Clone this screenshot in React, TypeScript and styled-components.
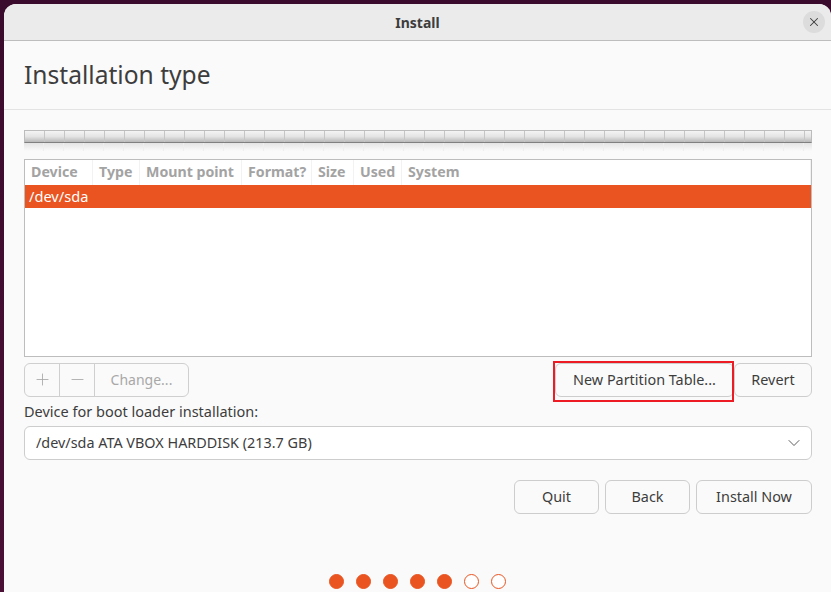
import styled, { createGlobalStyle } from "styled-components";
import { ChevronDown, Minus, Plus, X } from "lucide-react";

const GlobalStyle = createGlobalStyle`
  html, body {
    margin: 0;
    height: 592px;
    overflow: hidden;
    background: #3d0c2e;
  }
  * {
    box-sizing: border-box;
  }
`;

const Page = styled.div`
  height: 592px;
  padding: 4px 0 0 4px;
  background: linear-gradient(180deg, #3a0b2c 0%, #4a1035 100%);
  font-family: "Noto Sans", "Open Sans", sans-serif;
  color: #3d3d3d;
`;

const Window = styled.div`
  height: 588px;
  display: flex;
  flex-direction: column;
  background: #fafafa;
  border-radius: 12px 12px 0 0;
  overflow: hidden;
`;

const TitleBar = styled.div`
  position: relative;
  height: 37px;
  flex: none;
  display: flex;
  align-items: center;
  justify-content: center;
  background: #ebebeb;
  border-bottom: 1px solid #bdbdbd;
  font-size: 14px;
  font-weight: 700;
  color: #3d3d3d;
`;

const CloseButton = styled.div`
  position: absolute;
  right: 6px;
  top: 7px;
  width: 22px;
  height: 22px;
  border-radius: 50%;
  background: #dcdcdc;
  display: flex;
  align-items: center;
  justify-content: center;
  color: #3d3d3d;
`;

const Header = styled.div`
  height: 69px;
  flex: none;
  display: flex;
  align-items: center;
  padding: 0 20px 1px;
  border-bottom: 1px solid #e3e3e3;
  font-size: 24.6px;
  color: #3d3d3d;
`;

const Content = styled.div`
  flex: 1;
  display: flex;
  flex-direction: column;
  padding: 20px 19px 0 20px;
`;

const Ruler = styled.div`
  position: relative;
  height: 13px;
  flex: none;
  border-top: 1px solid #bcbcbc;
  border-left: 1px solid #bcbcbc;
  border-right: 1px solid #bcbcbc;
  border-bottom: 1px solid #808080;
  background:
    repeating-linear-gradient(90deg, transparent 0 19px, #c6c6c6 19px 20px),
    linear-gradient(180deg, #f4f4f4 0%, #e4e4e4 50%, #b8b8b8 100%);

  &::after {
    content: "";
    position: absolute;
    left: -1px;
    right: -1px;
    top: 12px;
    height: 8px;
    background:
      repeating-linear-gradient(90deg, transparent 0 19px, #efefef 19px 20px),
      linear-gradient(180deg, #e4e4e4 0%, #fafafa 100%);
  }
`;

const Table = styled.div`
  height: 198px;
  flex: none;
  margin-top: 16px;
  background: #ffffff;
  border: 1px solid #bdbdbd;
`;

const TableHead = styled.div`
  height: 25px;
  display: grid;
  grid-template-columns: 68px 47px 102px 70px 42px 48px 1fr;
`;

const HeadCell = styled.div`
  display: flex;
  align-items: center;
  padding: 0 0 2px 6px;
  border-right: 1px solid #f2f2f2;
  font-size: 14.2px;
  font-weight: 700;
  color: #a3a3a3;
  white-space: nowrap;
`;

const Row = styled.div`
  height: 23px;
  display: flex;
  align-items: center;
  padding: 0 0 1px 4px;
  background: #e95420;
  color: #ffffff;
  font-size: 14.6px;
`;

const ActionRow = styled.div`
  display: flex;
  justify-content: space-between;
  margin-top: 6px;
`;

const ButtonGroup = styled.div`
  display: flex;
  height: 34px;
  border: 1px solid #cfcfcf;
  border-radius: 6px;
  color: #a8a8a8;
  font-size: 14px;
`;

const GroupItem = styled.div<{ $width: number }>`
  width: ${(p) => p.$width}px;
  display: flex;
  align-items: center;
  justify-content: center;
  padding-bottom: 1px;
  & + & {
    border-left: 1px solid #cfcfcf;
  }
`;

const ButtonCluster = styled.div`
  display: flex;
`;

const Button = styled.div<{ $width: number }>`
  position: relative;
  width: ${(p) => p.$width}px;
  height: 34px;
  display: flex;
  align-items: center;
  justify-content: center;
  padding-bottom: 2px;
  border: 1px solid #cdcdcd;
  border-radius: 6px;
  font-size: 14.4px;
  color: #3d3d3d;
  white-space: nowrap;
`;

const Highlight = styled.div`
  position: absolute;
  inset: -3px -1px -6px -3px;
  border: 2px solid #ed1c24;
  pointer-events: none;
`;

const FieldLabel = styled.div`
  margin-top: 6px;
  height: 23px;
  display: flex;
  align-items: center;
  padding-bottom: 7px;
  font-size: 14.5px;
  color: #3d3d3d;
`;

const Select = styled.div`
  height: 34px;
  flex: none;
  display: flex;
  align-items: center;
  justify-content: space-between;
  padding: 0 7px 0 11px;
  background: #ffffff;
  border: 1px solid #cdcdcd;
  border-radius: 6px;
  font-size: 14.4px;
  color: #3d3d3d;
`;

const SelectText = styled.span`
  padding-bottom: 2px;
`;

const Footer = styled.div`
  display: flex;
  justify-content: flex-end;
  gap: 6px;
  margin-top: 20px;
`;

const Dots = styled.div`
  display: flex;
  justify-content: center;
  gap: 12px;
  margin-top: 60px;
  padding-right: 1px;
`;

const Dot = styled.div<{ $filled: boolean }>`
  width: 15px;
  height: 15px;
  border-radius: 50%;
  border: 1.5px solid #e95420;
  background: ${(p) => (p.$filled ? "#e95420" : "#ffffff")};
`;

const columns = ["Device", "Type", "Mount point", "Format?", "Size", "Used", "System"];
const steps = [true, true, true, true, true, false, false];

export default function App() {
  return (
    <Page>
      <GlobalStyle />
      <Window>
        <TitleBar>
          Install
          <CloseButton>
            <X size={14} strokeWidth={1.75} />
          </CloseButton>
        </TitleBar>
        <Header>Installation type</Header>
        <Content>
          <Ruler />
          <Table>
            <TableHead>
              {columns.map((c) => (
                <HeadCell key={c}>{c}</HeadCell>
              ))}
            </TableHead>
            <Row>/dev/sda</Row>
          </Table>
          <ActionRow>
            <ButtonGroup>
              <GroupItem $width={34}>
                <Plus size={19} strokeWidth={1.1} />
              </GroupItem>
              <GroupItem $width={35}>
                <Minus size={19} strokeWidth={1.1} />
              </GroupItem>
              <GroupItem $width={94}>Change...</GroupItem>
            </ButtonGroup>
            <ButtonCluster>
              <Button $width={179}>
                New Partition Table...
                <Highlight />
              </Button>
              <Button $width={78}>Revert</Button>
            </ButtonCluster>
          </ActionRow>
          <FieldLabel>Device for boot loader installation:</FieldLabel>
          <Select>
            <SelectText>/dev/sda ATA VBOX HARDDISK (213.7 GB)</SelectText>
            <ChevronDown size={20} strokeWidth={1} />
          </Select>
          <Footer>
            <Button $width={85}>Quit</Button>
            <Button $width={85}>Back</Button>
            <Button $width={116}>Install Now</Button>
          </Footer>
          <Dots>
            {steps.map((filled, i) => (
              <Dot key={i} $filled={filled} />
            ))}
          </Dots>
        </Content>
      </Window>
    </Page>
  );
}
